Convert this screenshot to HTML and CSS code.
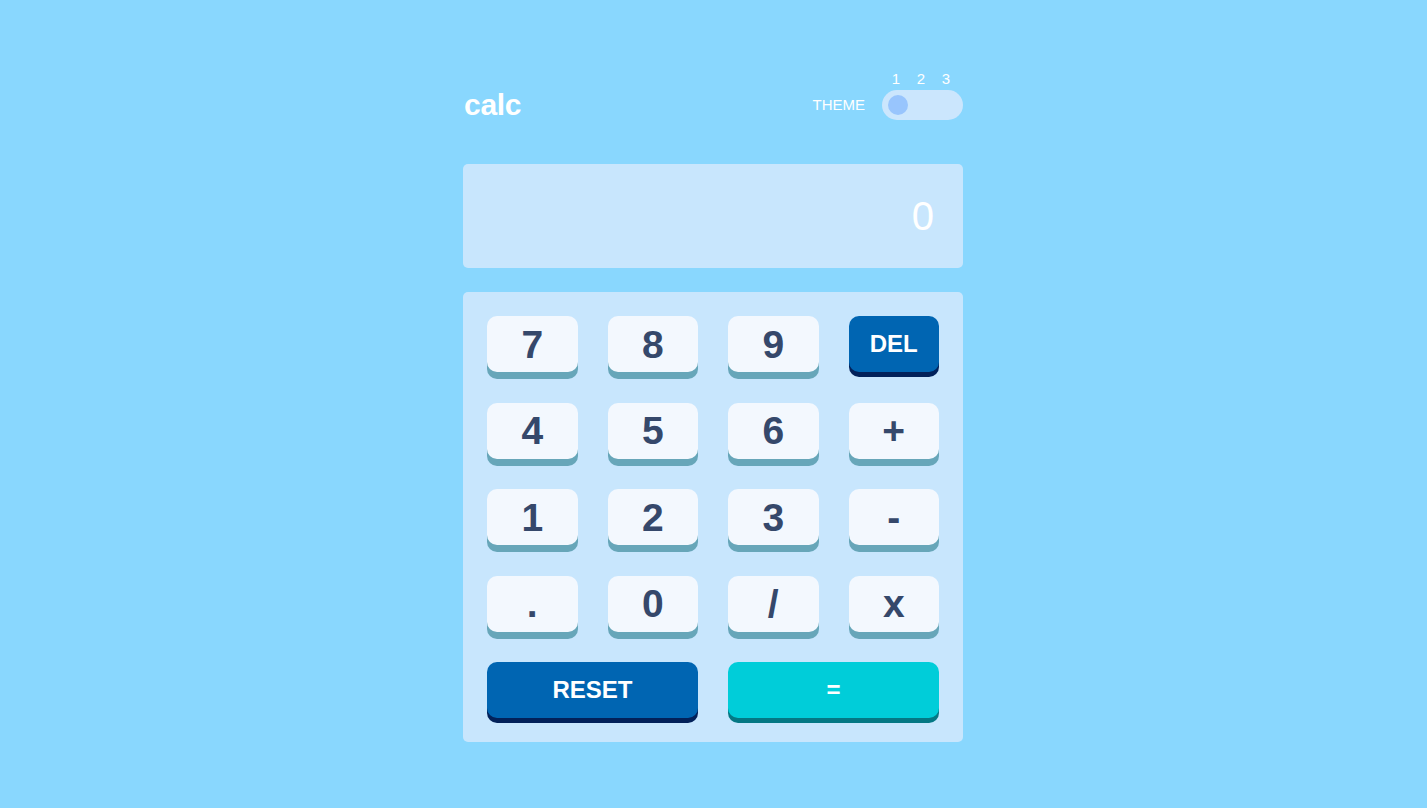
FILE: index.html
```html
<!DOCTYPE html>
<html lang="en">
<head>
<meta charset="utf-8">
<title>calc</title>
<link rel="stylesheet" href="styles.css">
</head>
<body>
<main class="calc">
  <header class="calc-header">
    <h1 class="logo">calc</h1>
    <div class="theme">
      <span class="theme-label">THEME</span>
      <div class="theme-switch">
        <div class="theme-nums"><span>1</span><span>2</span><span>3</span></div>
        <div class="toggle"><span class="knob"></span></div>
      </div>
    </div>
  </header>
  <section class="screen"><span class="screen-value">0</span></section>
  <section class="keypad">
    <button class="key">7</button>
    <button class="key">8</button>
    <button class="key">9</button>
    <button class="key key-dark key-word">DEL</button>
    <button class="key">4</button>
    <button class="key">5</button>
    <button class="key">6</button>
    <button class="key">+</button>
    <button class="key">1</button>
    <button class="key">2</button>
    <button class="key">3</button>
    <button class="key">-</button>
    <button class="key">.</button>
    <button class="key">0</button>
    <button class="key">/</button>
    <button class="key">x</button>
    <button class="key key-dark key-word key-wide">RESET</button>
    <button class="key key-accent key-word key-wide">=</button>
  </section>
</main>
</body>
</html>
```

FILE: styles.css
```css
* { box-sizing: border-box; }
html, body { margin: 0; padding: 0; }
body {
  background: #89d7fe;
  font-family: "Liberation Sans", Arial, Helvetica, sans-serif;
  color: #ffffff;
  min-height: 808px;
  padding-right: 1px;
}
.calc {
  width: 500px;
  margin: 0 auto;
  padding-top: 70px;
}
.calc-header {
  display: flex;
  justify-content: space-between;
  align-items: flex-end;
}
.logo {
  margin: 0;
  font-size: 30px;
  line-height: 30px;
  font-weight: 700;
  padding-left: 1px;
  letter-spacing: -0.3px;
}
.theme {
  display: flex;
  align-items: flex-end;
  gap: 17px;
}
.theme-label {
  font-size: 15px;
  line-height: 30px;
}
.theme-switch {
  display: flex;
  flex-direction: column;
  width: 81px;
}
.theme-nums {
  display: grid;
  grid-template-columns: repeat(3, 25px);
  padding-left: 1.5px;
  font-size: 15px;
  line-height: 18px;
  margin-bottom: 2px;
  text-align: center;
}
.toggle {
  height: 30px;
  border-radius: 15px;
  background: #cbe6fd;
  padding: 5px 6px;
  display: flex;
  align-items: center;
}
.knob {
  width: 20px;
  height: 20px;
  border-radius: 50%;
  background: #98c5fd;
}
.screen {
  margin-top: 44px;
  height: 104px;
  background: #c8e6fd;
  border-radius: 5px;
  display: flex;
  align-items: center;
  justify-content: flex-end;
  padding-right: 29px;
}
.screen-value {
  font-size: 40px;
  line-height: 1;
}
.keypad {
  margin-top: 24px;
  background: #c8e6fd;
  border-radius: 5px;
  padding: 24px;
  display: grid;
  grid-template-columns: repeat(4, 1fr);
  grid-auto-rows: 56px;
  column-gap: 30px;
  row-gap: 30.5px;
}
.key {
  border: 0;
  margin: 0;
  padding: 0;
  height: 56px;
  border-radius: 10px;
  background: #f3f8fe;
  box-shadow: 0 7px 0 #67a6b9;
  color: #35486b;
  font-family: "Liberation Sans", Arial, Helvetica, sans-serif;
  font-weight: 700;
  font-size: 39px;
  line-height: 1;
  display: flex;
  align-items: center;
  justify-content: center;
}
.key-word { font-size: 24px; }
.key-dark {
  background: #0065b2;
  color: #ffffff;
  box-shadow: 0 5px 0 #02215a;
}
.key-accent {
  background: #00cdd9;
  color: #ffffff;
  box-shadow: 0 5px 0 #047884;
}
.key-wide { grid-column: span 2; }
```
